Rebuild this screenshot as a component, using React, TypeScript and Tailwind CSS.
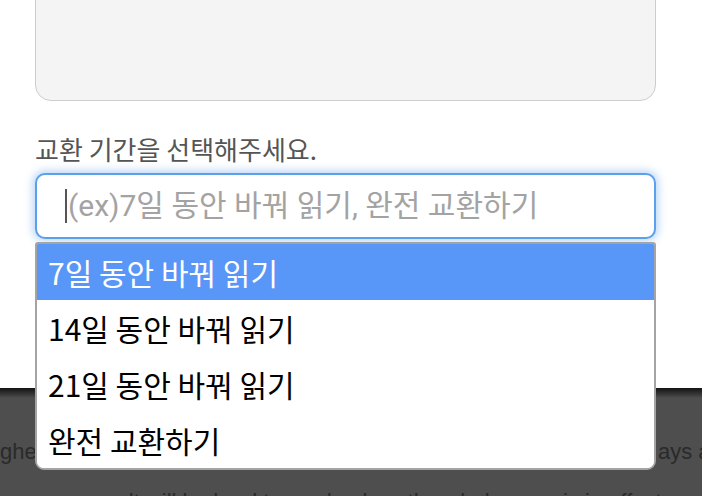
import React from "react";

const items = ["7일 동안 바꿔 읽기", "14일 동안 바꿔 읽기", "21일 동안 바꿔 읽기", "완전 교환하기"];

export default function App() {
  return (
    <div className="relative w-[702px] h-[496px] overflow-hidden bg-white font-['Noto_Sans_CJK_KR','Noto_Sans',sans-serif]">
      <div className="flex h-[388px] flex-col pl-[35px] pr-[46px] bg-white">
        <div className="-mt-[30px] h-[131px] shrink-0 rounded-[16px] border-[1.5px] border-[#cdcdcd] bg-[#f4f4f4]" />
        <div className="mt-[32px] text-[26px] leading-[32px] text-[#555555]">교환 기간을 선택해주세요.</div>
        <div className="mt-[8px] flex h-[66px] shrink-0 items-center rounded-[10px] border-2 border-[#5aa0ea] bg-white pl-[28px] shadow-[0_0_8px_2px_rgba(90,160,234,0.45)]">
          <span className="mr-[1px] h-[34px] w-[2px] bg-[#555555]" />
          <span className="text-[30px] leading-none text-[#a3a3a3] font-['Roboto','Noto_Sans_CJK_KR',sans-serif]">(ex)7일 동안 바꿔 읽기, 완전 교환하기</span>
        </div>
      </div>
      <div className="relative h-[108px] bg-[#4e4e4e]">
        <div className="h-[10px] bg-gradient-to-b from-[#141414] to-[#4e4e4e]" />
        <div className="mt-[42px] flex justify-between text-[22px] leading-[24px] text-[#2a2a2a] font-['Liberation_Sans',sans-serif]">
          <span className="w-[35px] overflow-hidden text-right">ghe</span>
          <span className="w-[44px] overflow-hidden whitespace-nowrap">ays a</span>
        </div>
        <div className="mt-[26px] pl-[86px] whitespace-nowrap text-[22px] leading-[24px] text-[#2a2a2a] font-['Liberation_Sans',sans-serif]">
          result will be hard to read unless the whole page is in effect
        </div>
      </div>
      <div className="absolute left-[35px] top-[242px] w-[621px] overflow-hidden rounded-b-[9px] rounded-t-[3px] border-2 border-[#a4a4a4] bg-white">
        {items.map((t, i) => (
          <div
            key={t}
            className={
              i === 0
                ? "flex h-[56px] items-center bg-[#5897f7] pl-[11px] text-[30px] leading-none text-white"
                : "flex h-[56px] items-center bg-white pl-[11px] text-[30px] leading-none text-black"
            }
          >
            {t}
          </div>
        ))}
      </div>
    </div>
  );
}
